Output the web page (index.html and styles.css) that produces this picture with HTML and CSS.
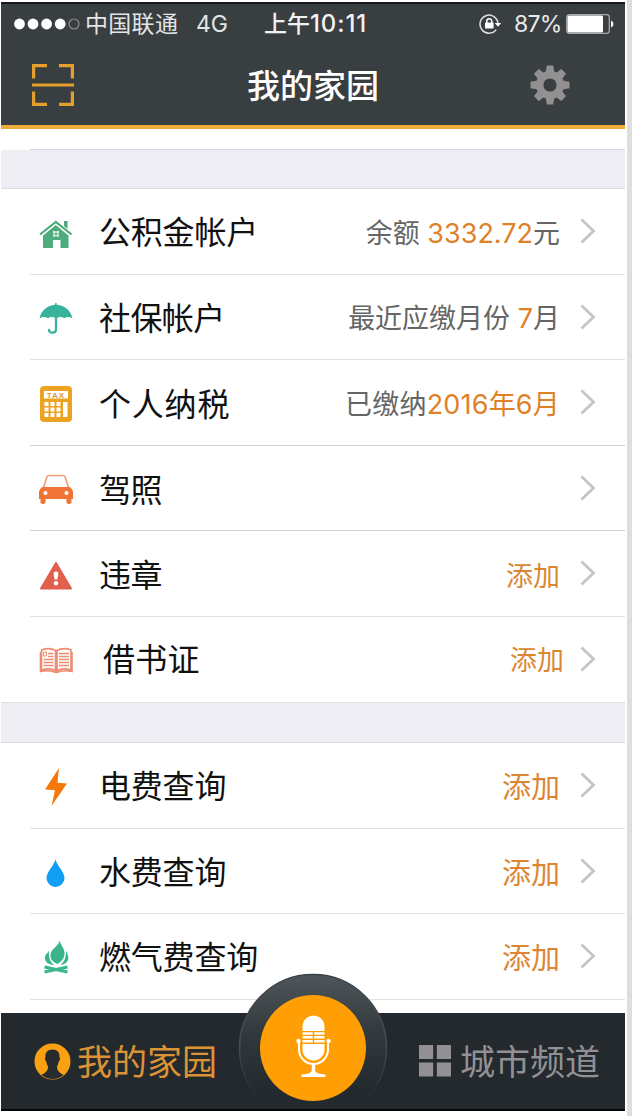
FILE: index.html
```html
<!DOCTYPE html>
<html lang="zh-CN">
<head>
<meta charset="utf-8">
<title>我的家园</title>
<link rel="stylesheet" href="styles.css">
</head>
<body>
<div class="phone">
  <header class="header">
    <div class="status">
      <svg class="signal" width="66" height="12" viewBox="0 0 66 12"><g fill="#fff"><circle cx="5.5" cy="6" r="5.4"/><circle cx="19" cy="6" r="5.4"/><circle cx="32.6" cy="6" r="5.4"/><circle cx="46.2" cy="6" r="5.4"/></g><circle cx="60" cy="6" r="5" fill="none" stroke="#8b9093" stroke-width="1.2"/></svg>
      <span class="carrier">中国联通</span>
      <span class="network">4G</span>
      <span class="time">上午<span class="clock">10:11</span></span>
      <svg class="lock" width="23" height="20" viewBox="0 0 23 20"><path d="M17.200 15.600A9 9 0 1 1 19 9.500" fill="none" stroke="#dfe1e2" stroke-width="1.500"/><path d="M15.800 9h6.400l-3.200 3.800z" fill="#fff"/><rect x="6" y="8.600" width="8.600" height="6" rx=".6" fill="#fff"/><path d="M7.800 9V7.200a2.500 2.500 0 0 1 5 0V9" fill="none" stroke="#fff" stroke-width="1.500"/></svg>
      <span class="percent">87%</span>
      <svg class="battery" width="48" height="20" viewBox="0 0 48 20"><rect x=".7" y=".7" width="42.6" height="18.6" rx="2.5" fill="none" stroke="#a5a9ab" stroke-width="1.3"/><rect x="1.5" y="1.5" width="35.5" height="17" rx="1.5" fill="#fff"/><path d="M45 6.5q2.5 1 2.5 3.5T45 13.5z" fill="#fff"/></svg>
    </div>
    <div class="titlebar">
      <svg class="scan" width="42" height="42" viewBox="0 0 42 42" fill="none" stroke="#e5a02c" stroke-width="3.2"><path d="M1.6 14.5V1.6H15M27 1.6h13.4v12.9M1.6 27.5v12.9H15M27 40.4h13.4V27.5M0 21h42"/></svg>
      <h1 class="title">我的家园</h1>
      <svg class="gear" width="40" height="40" viewBox="-20 -20 40 40" fill="#929091"><path fill-rule="evenodd" d="M-4.200-13.500-3.200-19.500H3.200L4.200-13.500 6.600-12.500 11.300-16 16-11.300 12.500-6.600 13.500-4.200 19.500-3.200V3.200L13.500 4.200 12.500 6.600 16 11.300 11.300 16 6.600 12.500 4.200 13.500 3.200 19.500H-3.200L-4.200 13.500-6.600 12.500-11.300 16-16 11.300-12.500 6.600-13.500 4.200-19.500 3.200V-3.200L-13.500-4.200-12.500-6.600-16-11.300-11.300-16-6.600-12.500ZM6.600 0A6.600 6.600 0 1 0-6.600 0 6.600 6.600 0 1 0 6.600 0Z"/></svg>
    </div>
  </header>

  <main class="content">
    <div class="stub"></div>
    <div class="band band-first"></div>
    <section class="group group-account">
      <div class="row">
        <svg class="icon" width="36" height="36" viewBox="0 0 36 36" fill="#4dab7c"><path d="M5 20.500 17.800 10l12.700 10.500V33H22.500v-8h-7.500v8H5z"/><path d="M2 19.500 17.800 7 33.500 19.500" fill="none" stroke="#4dab7c" stroke-width="2.200"/><path d="M26 6h3.500v8L26 11z"/><path d="M3.400 21 17.800 9.300 32 21" fill="none" stroke="#fff" stroke-width=".8"/><path d="M15 16h2.600v2.400H15zM18.400 16H21v2.400h-2.600zM15 19.400h2.600v2.400H15zM18.400 19.400H21v2.400h-2.600z" fill="#e8f5ee"/></svg>
        <span class="label">公积金帐户</span>
        <span class="value value-balance">余额 <b>3332.72</b>元</span>
        <svg class="chevron" width="16" height="26" viewBox="0 0 16 26"><path d="m1.500 1.500 12 11.500-12 11.500"/></svg>
      </div>
      <div class="row">
        <svg class="icon" width="36" height="36" viewBox="0 0 36 36" fill="#38b39b"><path d="M1.500 17.500C3 9.500 9.500 4.300 17 3.700V2.200h1.800v1.500C26.500 4.300 33 9.500 34.500 17.500c-2.500-1.800-5.500-2-8.200-.2-2.600-1.800-5.200-1.800-8.200 0-3-1.800-5.800-1.800-8.300 0-2.800-1.800-5.700-1.600-8.300.2z"/><path d="M18 16v12.500c0 4.200-7 4.200-7 .5" fill="none" stroke="#38b39b" stroke-width="2.300" stroke-linecap="round"/></svg>
        <span class="label label-social">社保帐户</span>
        <span class="value value-month">最近应缴月份 <b>7</b>月</span>
        <svg class="chevron" width="16" height="26" viewBox="0 0 16 26"><path d="m1.500 1.500 12 11.500-12 11.500"/></svg>
      </div>
      <div class="row row-strong">
        <svg class="icon" width="36" height="36" viewBox="0 0 36 36"><rect x="2" y="0" width="32" height="36" rx="4" fill="#eca321"/><rect x="6" y="5" width="24" height="7.500" fill="#fff"/><text x="18" y="11.800" text-anchor="middle" class="tax">TAX</text><path d="M6.500 16h4v4h-4zM12.500 16h4v4h-4zM18.500 16h4v4h-4zM6.500 21.500h4v4h-4zM12.500 21.500h4v4h-4zM18.500 21.500h4v4h-4zM6.500 27h4v4h-4zM12.500 27h4v4h-4zM18.500 27h4v4h-4zM25 16h4.500v15H25z" fill="#fff"/></svg>
        <span class="label label-tax">个人纳税</span>
        <span class="value value-tax">已缴纳<b>2016年6月</b></span>
        <svg class="chevron" width="16" height="26" viewBox="0 0 16 26"><path d="m1.500 1.500 12 11.500-12 11.500"/></svg>
      </div>
      <div class="row row-strong">
        <svg class="icon" width="36" height="36" viewBox="0 0 36 36"><path d="M5 17 9 4.800Q9.500 3.500 11 3.500h14q1.500 0 2 1.300L31 17" fill="none" stroke="#f0a071" stroke-width="1.700"/><path d="M4.500 15h27q3.500 2 3.500 5.500v6.500H33.500V31q-2.500 2-5 0v-4H7.500V31q-2.500 2-5 0v-4H1V20.500q0-3.500 3.500-5.500z" fill="#ef7436"/><circle cx="7.500" cy="21" r="2" fill="#fff"/><circle cx="28.500" cy="21" r="2" fill="#fff"/></svg>
        <span class="label label-car">驾照</span>
        <span class="value"></span>
        <svg class="chevron" width="16" height="26" viewBox="0 0 16 26"><path d="m1.500 1.500 12 11.500-12 11.500"/></svg>
      </div>
      <div class="row">
        <svg class="icon" width="36" height="36" viewBox="0 0 36 36"><path d="M18 6 33 31.500H3z" fill="#e0604d" stroke="#e0604d" stroke-width="2" stroke-linejoin="round"/><path d="M18 14.500c3.400 0 2.400 3.500 1.300 8h-2.600c-1.100-4.500-2.100-8 1.300-8z" fill="#fff"/><circle cx="18" cy="26.200" r="2.200" fill="#fff"/></svg>
        <span class="label label-car">违章</span>
        <span class="value add">添加</span>
        <svg class="chevron" width="16" height="26" viewBox="0 0 16 26"><path d="m1.500 1.500 12 11.500-12 11.500"/></svg>
      </div>
      <div class="row row-last">
        <svg class="icon icon-book" width="36" height="36" viewBox="0 0 36 36" fill="none" stroke="#ee8b71"><path d="M3.500 8q8-3 14 .5v20q-6-3-14-.5zM33 8q-8-3-14 .5v20q6-3 14-.5zM2.500 10v19.500q8-2 15.700 1 7.800-3 15.800-1V10" stroke-width="1.600"/><path d="M10 11.500h5.500M10 14.500h5.500M5.500 17.500h10M5.500 20.500h10M5.500 23.500h10M21 11.500h10M21 14.500h10M21 17.500h10M21 20.500h10M21 23.500h10" stroke-width="1.500"/><path d="M5.500 10h3v4h-3z" fill="none"/></svg>
        <span class="label label-book">借书证</span>
        <span class="value add add-book">添加</span>
        <svg class="chevron" width="16" height="26" viewBox="0 0 16 26"><path d="m1.500 1.500 12 11.500-12 11.500"/></svg>
      </div>
    </section>
    <div class="band"></div>
    <section class="group group-utility">
      <div class="row">
        <svg class="icon" width="36" height="40" viewBox="0 0 36 40"><path d="M21 1 7 22.500l10 .8L13.500 39 29 16.500l-9.500-.8z" fill="#f5780d"/></svg>
        <span class="label">电费查询</span>
        <span class="value add add-large">添加</span>
        <svg class="chevron" width="16" height="26" viewBox="0 0 16 26"><path d="m1.500 1.500 12 11.500-12 11.500"/></svg>
      </div>
      <div class="row">
        <svg class="icon" width="36" height="36" viewBox="0 0 36 36"><path d="M17.500 4.500C19 10.500 26.500 17 26.500 23a9 9 0 0 1-18 0C8.500 17 16 10.500 17.500 4.500z" fill="#119ff5"/></svg>
        <span class="label">水费查询</span>
        <span class="value add add-large">添加</span>
        <svg class="chevron" width="16" height="26" viewBox="0 0 16 26"><path d="m1.500 1.500 12 11.500-12 11.500"/></svg>
      </div>
      <div class="row">
        <svg class="icon" width="36" height="36" viewBox="0 0 36 36" fill="#39b48d"><path d="M22 0c-.5 5 5.500 8 4.500 15-.5 3.500-3 6.500-7 9-5-2-7.500-5-7-9.500C13.200 8.500 20.500 6.500 22 0z"/><path d="M11 10.500c-.5 6 .5 11 5 14.500C9 24.500 6.500 20.500 7 17 7.500 14 10 13 11 10.500zM28 9.500c.5 6-1 12-5.500 15.500 5.500-.5 8.300-4 7.800-8C30 14 28.300 12.500 28 9.500z"/><path d="M6.500 27 29.500 32M29.500 27 6.500 32" stroke="#39b48d" stroke-width="3"/></svg>
        <span class="label">燃气费查询</span>
        <span class="value add add-large">添加</span>
        <svg class="chevron" width="16" height="26" viewBox="0 0 16 26"><path d="m1.500 1.500 12 11.500-12 11.500"/></svg>
      </div>
    </section>
  </main>

  <nav class="tabbar">
    <div class="tab tab-home">
      <svg width="37" height="37" viewBox="0 0 37 37"><circle cx="18.500" cy="18.500" r="17" fill="#f9a113" stroke="#f9a113" stroke-width="2"/><path d="M18.500 6.500c5.500 0 7.500 3.700 7 8.200 1 .5.500 3-.7 3.500-.6 3-1.300 4-1.800 5.500 0 4 2 5.500 6.500 8.300a17 17 0 0 1-22 0c4.500-2.800 6.500-4.300 6.500-8.300-.5-1.500-1.200-2.500-1.800-5.500-1.200-.5-1.700-3-.7-3.500-.5-4.500 1.500-8.200 7-8.200z" fill="#252b2f"/></svg>
      <span>我的家园</span>
    </div>
    <div class="tab tab-city">
      <svg width="32" height="32" viewBox="0 0 32 32" fill="#929094"><path d="M0 0h14.200v14H0zM17.800 0H32v14H17.800zM0 17.600h14.200v14H0zM17.800 17.600H32v14H17.800z"/></svg>
      <span>城市频道</span>
    </div>
    <svg class="mic" width="150" height="150" viewBox="0 0 150 150">
      <defs><linearGradient id="ring" x1="0" y1="0" x2="0" y2="1"><stop offset="0" stop-color="#4e565b"/><stop offset=".4" stop-color="#32393d"/><stop offset=".8" stop-color="#23292d"/></linearGradient><linearGradient id="rim" x1="0" y1="0" x2="0" y2="1"><stop offset="0" stop-color="#383f43"/><stop offset=".45" stop-color="#485054"/><stop offset=".85" stop-color="#23292d"/></linearGradient></defs>
      <circle cx="75" cy="75" r="73.500" fill="url(#ring)" stroke="url(#rim)" stroke-width="1.500"/>
      <circle cx="75" cy="75" r="53" fill="#ff9f05"/>
      <g fill="#fff"><path d="M64.500 58V53.500a11 11 0 0 1 22 0V58zM64.500 59.300h10.300v2.500H64.500zM76.200 59.300h10.300v2.500H76.200zM64.500 63.100h10.300v2.500H64.500zM76.200 63.100h10.300v2.500H76.200zM64.500 66.900h10.300v2.500H64.500zM76.200 66.900h10.300v2.500H76.200zM64.500 71h22v5.500a11 11 0 0 1-22 0z"/><path d="M61 68v8.500a14.500 14.500 0 0 0 29 0V68" fill="none" stroke="#fff" stroke-width="2"/><path d="M73.800 90h3.400v7.500q0 3.500 10.300 4v2.500h-24v-2.500q10.300-.5 10.300-4z"/><circle cx="60.500" cy="68" r="2.200"/><circle cx="90.500" cy="68" r="2.200"/></g>
    </svg>
  </nav>
</div>
</body>
</html>
```

FILE: styles.css
```css
* { box-sizing: border-box; }
body {
  margin: 0;
  width: 632px;
  height: 1116px;
  overflow: hidden;
  background: #fff;
  border-right: 5px solid #dedede;
  padding: 2px 0 0 1px;
  font-family: Inter, "Noto Sans CJK SC", sans-serif;
}
.phone { width: 624px; height: 1109px; display: flex; flex-direction: column; }
.header {
  height: 127px;
  flex: none;
  background: #393e41;
  border-top: 2px solid #17191b;
  border-bottom: 4px solid #eeaa3b;
}
.status {
  height: 40px;
  display: flex;
  align-items: center;
  color: #f1f2f2;
  font-size: 23px;
  line-height: 40px;
  white-space: nowrap;
}
.signal { margin-left: 13px; }
.carrier { margin-left: 5px; width: 111px; color: #e2e4e5; letter-spacing: 0.3px; }
.network { width: 68px; color: #e2e4e5; }
.time { width: 215px; font-weight: 500; }
.clock { letter-spacing: 0.9px; font-size: 24px; }
.percent { margin-left: 12px; width: 52px; color: #e8eaeb; letter-spacing: -0.8px; }
.titlebar { height: 81px; display: flex; align-items: center; }
.scan { margin-left: 31px; }
.title {
  margin: 0 0 0 173px;
  padding-top: 3px;
  width: 283px;
  color: #fff;
  font-size: 33px;
  line-height: 48px;
  font-weight: 500;
}
.content { height: 884px; flex: none; }
.stub { height: 21px; margin-left: 29px; border-bottom: 1px solid #d4d4da; }
.band { height: 41px; background: #eeedf3; border-top: 1px solid #e0e0e6; border-bottom: 1px solid #dcdce0; }
.band-first { height: 39px; border-top: 0; }
.group { display: flex; flex-direction: column; }
.row {
  height: 85.5px;
  margin-left: 29px;
  padding-right: 29px;
  display: flex;
  align-items: center;
  border-bottom: 1px solid #e2e2e4;
}
.row-strong { border-bottom-color: #d0d0d3; }
.row-last { border-bottom: 0; }
.group-account { height: 513px; }
.icon { flex: none; margin: 4px 0 0 8px; }
.icon-book { margin-top: 2px; }
.label {
  margin-left: 25px;
  padding-top: 4px;
  flex: 1;
  color: #111;
  font-size: 32px;
  line-height: 48px;
  letter-spacing: -0.2px;
  white-space: nowrap;
}
.label-social { letter-spacing: -0.6px; }
.label-tax { letter-spacing: 0.8px; padding-top: 5px; }
.label-car { padding-top: 6px; letter-spacing: -0.6px; }
.label-book { margin-left: 29px; padding-top: 2px; letter-spacing: 0.2px; }
.value { margin-right: 20px; padding-top: 5px; color: #666; font-size: 27px; line-height: 40px; white-space: nowrap; }
.value-tax { letter-spacing: 0.2px; }
.value b { color: #e08128; font-weight: 400; }
.value.add { padding-top: 7px; color: #dc8633; }
.value.add-book { margin-right: 16px; padding-top: 4px; }
.value.add-large { padding-top: 6px; font-size: 29px; }
.chevron { flex: none; fill: none; stroke: #c5c5c8; stroke-width: 2.8; }
.tax { font: bold 8px "Liberation Sans", sans-serif; letter-spacing: 1px; fill: #dc9a3a; }
.tabbar {
  position: relative;
  height: 98px;
  flex: none;
  display: flex;
  align-items: center;
  background: #23292d;
  border-bottom: 2px solid #050607;
}
.tab { display: flex; align-items: center; font-size: 35px; line-height: 52px; white-space: nowrap; }
.tab span { padding-top: 2px; }
.tab-home { margin-left: 33px; width: 385px; gap: 6px; color: #dc9335; }
.tab-city { gap: 9px; color: #929094; }
.mic { position: absolute; left: 237px; top: -40px; clip-path: inset(0 0 14px); }
```
